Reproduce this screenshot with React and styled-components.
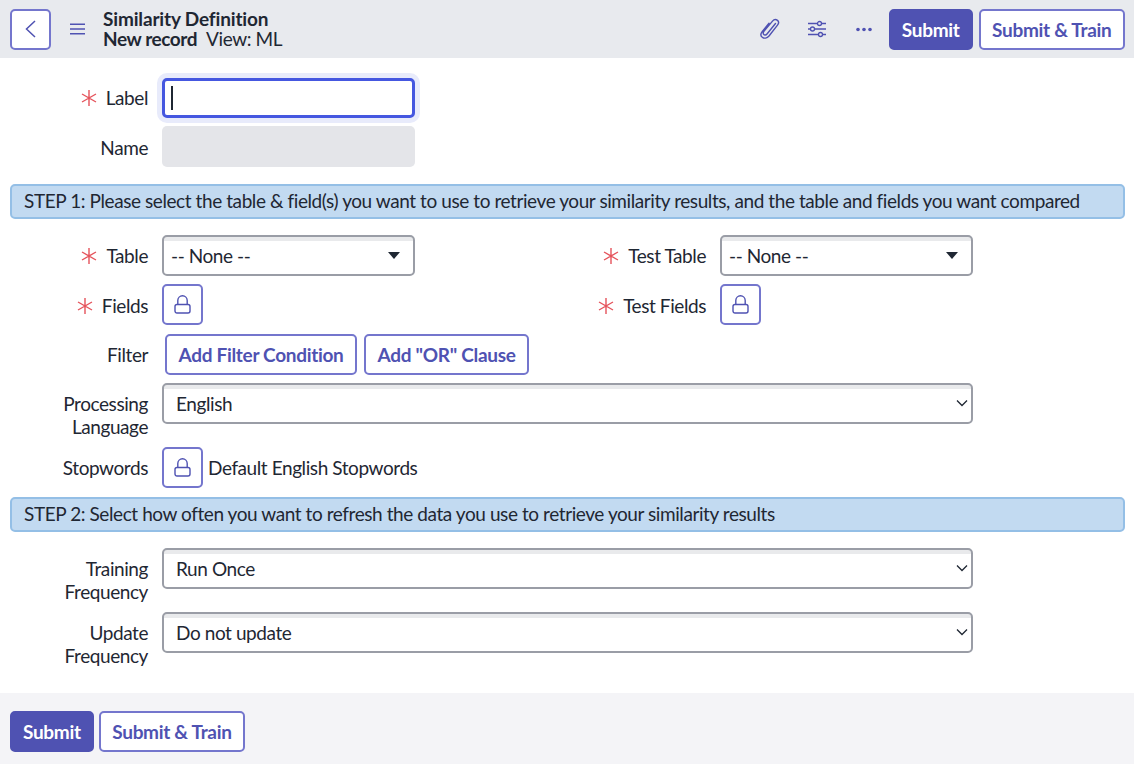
import React from "react";
import styled, { createGlobalStyle } from "styled-components";

const Global = createGlobalStyle`
  html, body { margin: 0; padding: 0; background: #fff; }
  body { font-family: Lato, "Liberation Sans", sans-serif; color: #1f2733; font-size: 19px; letter-spacing: -0.42px; }
  button { letter-spacing: -0.3px; }
  * { box-sizing: border-box; }
`;
const Page = styled.div`width: 1134px; height: 764px; display: flex; flex-direction: column; overflow: hidden;`;
const Header = styled.header`height: 58px; flex: none; background: #e8eaee; display: flex; align-items: center; padding: 0 9px 0 10px;`;
const IconButton = styled.button`
  width: 41px; height: 41px; padding: 0; background: #fff; border: 2px solid #7476cd; border-radius: 5px;
  color: #4f52b2; display: flex; align-items: center; justify-content: center; flex: none;
`;
const MenuIcon = styled.span`display: flex; margin-left: 19px; color: #4f52b2;`;
const TitleBlock = styled.div`margin-left: 18px; line-height: 20px; color: #1f2733; flex: 1; letter-spacing: -0.15px;`;
const TitleLine = styled.div`letter-spacing: ${p => p.$tight ? "-0.42px" : "-0.15px"};`;
const Strong = styled.span`font-weight: 700;`;
const ViewName = styled.span`margin-left: 9px;`;
const ToolIcon = styled.span`display: flex; width: 24px; height: 24px; align-items: center; justify-content: center; color: #4f52b2; margin-right: ${p => p.$mr}px;`;
const Button = styled.button`
  height: 41px; padding: 0 ${p => p.$primary ? 11 : 11.5}px; border-radius: 5px; font: 700 19px Lato, sans-serif;
  border: 2px solid ${p => p.$primary ? "#4f52b2" : "#7476cd"};
  background: ${p => p.$primary ? "#4f52b2" : "#fff"};
  color: ${p => p.$primary ? "#fff" : "#4f52b2"};
  flex: none; white-space: nowrap;
`;
const Buttons = styled.div`display: flex; gap: 6px;`;
const Form = styled.main`flex: 1; min-height: 0; padding: 20px 9px 0 10px; display: flex; flex-direction: column;`;
const Row = styled.div`display: flex; align-items: flex-start; margin-bottom: ${p => p.$mb ?? 8}px;`;
const Label = styled.label`
  width: 138px; flex: none; text-align: right; line-height: 23px;
  padding-top: ${p => p.$top ?? 9}px; color: #1f2733; margin-right: 14px;
  display: flex; justify-content: flex-end; align-items: baseline;
`;
const LabelText = styled.span`display: block;`;
const Req = styled.span`display: inline-flex; align-self: center; margin-right: 8px; color: #e5535b;`;
const FocusInput = styled.div`
  width: 253px; height: 40px; border: 3px solid #4557e0; border-radius: 5px; background: #fff;
  box-shadow: 0 0 0 5px #e8ebfb; padding: 6px; display: flex; align-items: center;
`;
const Caret = styled.span`width: 1.5px; height: 24px; background: #1f2733;`;
const Disabled = styled.div`width: 253px; height: 41px; background: #e4e5e9; border-radius: 5px;`;
const Banner = styled.div`
  height: 35px; background: #c2daf1; border: 2px solid #94bfe6; border-radius: 5px; flex: none;
  line-height: 29px; padding-left: 12px; color: #1f2733; margin-bottom: ${p => p.$mb}px; white-space: nowrap;
`;
const Select = styled.div`
  width: 253px; height: 41px; border: 2px solid #9a9da6; border-radius: 5px; flex: none;
  background: linear-gradient(#e9eaec 0, #e9eaec 4px, #fff 4px);
  display: flex; align-items: center; justify-content: space-between;
  padding: 0 13px 0 7px; color: #1f2733;
`;
const WideSelect = styled(Select)`width: 811px; padding: 0 3px 1px 12px;`;
const Caretdown = styled.span`width: 0; height: 0; border-left: 6px solid transparent; border-right: 6px solid transparent; border-top: 7px solid #1f2733;`;
const Cols = styled.div`display: flex; margin-bottom: ${p => p.$mb}px;`;
const Half = styled.div`display: flex; width: ${p => p.$w}px; align-items: flex-start;`;
const ClauseButtons = styled.div`display: flex; gap: 7px; margin-left: 3px;`;
const StopValue = styled.span`margin-left: 5px; line-height: 41px;`;
const Footer = styled.footer`height: 71px; flex: none; background: #f4f4f7; display: flex; align-items: flex-start; padding: 18px 10px 0; gap: 5px;`;

const Star = () => (
  <Req>
    <svg width="18" height="18" viewBox="0 0 18 18" fill="none" stroke="currentColor" strokeWidth="1.4">
      <path d="M9 1v16M2 5l14 8M16 5L2 13" />
    </svg>
  </Req>
);
const Lock = () => (
  <svg width="17" height="19" viewBox="0 0 17 19" fill="none" stroke="currentColor" strokeWidth="1.4">
    <rect x="1" y="9.500" width="15" height="8.500" rx="2" />
    <path d="M3.800 9.500V5.500a4.700 4.700 0 0 1 9.400 0v4" />
  </svg>
);
const Chevron = () => (
  <svg width="12" height="8" viewBox="0 0 12 8" fill="none" stroke="#1f2733" strokeWidth="1.3">
    <path d="M1 1.500l5 5 5-5" />
  </svg>
);

export default function App() {
  return (
    <Page>
      <Global />
      <Header>
        <IconButton aria-label="Back">
          <svg width="12" height="20" viewBox="0 0 12 20" fill="none" stroke="currentColor" strokeWidth="1.5">
            <path d="M10 2L1.500 10l8.500 8" />
          </svg>
        </IconButton>
        <MenuIcon>
          <svg width="15" height="12" viewBox="0 0 15 12" fill="none" stroke="currentColor" strokeWidth="1.5">
            <path d="M0 1.200h15M0 6h15M0 10.800h15" />
          </svg>
        </MenuIcon>
        <TitleBlock>
          <TitleLine><Strong>Similarity Definition</Strong></TitleLine>
          <TitleLine $tight><Strong>New record</Strong><ViewName>View: ML</ViewName></TitleLine>
        </TitleBlock>
        <ToolIcon $mr={23}>
          <svg width="20" height="22" viewBox="0 0 20 22" fill="none" stroke="currentColor" strokeWidth="1.400" strokeLinecap="round">
            <path d="M15.500 5.500L7 16c-1 1.300-2.700 1.200-3.300.4-.7-.8-.6-2 .2-3l8.600-10.300c1.400-1.700 3.600-1.800 5-.7 1.300 1.100 1.300 3.100 0 4.700L9 18c-2 2.400-5 2.700-6.700 1.300C.7 18 .6 15.500 2.300 13.400L9 5.300" />
          </svg>
        </ToolIcon>
        <ToolIcon $mr={23}>
          <svg width="20" height="18" viewBox="0 0 20 18" fill="none" stroke="currentColor" strokeWidth="1.300">
            <path d="M1 3.500h9.500M14.500 3.500H19M1 9h2.500M7.500 9H19M1 14.500h10.500M15.500 14.500H19" />
            <circle cx="12.500" cy="3.500" r="2" /><circle cx="5.500" cy="9" r="2" /><circle cx="13.500" cy="14.500" r="2" />
          </svg>
        </ToolIcon>
        <ToolIcon $mr={13}>
          <svg width="16" height="5" viewBox="0 0 16 5" fill="currentColor">
            <circle cx="2" cy="2.500" r="1.800" /><circle cx="8" cy="2.500" r="1.800" /><circle cx="14" cy="2.500" r="1.800" />
          </svg>
        </ToolIcon>
        <Buttons>
          <Button $primary>Submit</Button>
          <Button>Submit &amp; Train</Button>
        </Buttons>
      </Header>
      <Form>
        <Row>
          <Label $top={8}><Star /><LabelText>Label</LabelText></Label>
          <FocusInput><Caret /></FocusInput>
        </Row>
        <Row $mb={17}>
          <Label $top={10}><LabelText>Name</LabelText></Label>
          <Disabled />
        </Row>
        <Banner $mb={16}>STEP 1: Please select the table &amp; field(s) you want to use to retrieve your similarity results, and the table and fields you want compared</Banner>
        <Cols $mb={8}>
          <Half $w={558}>
            <Label><Star /><LabelText>Table</LabelText></Label>
            <Select><span>-- None --</span><Caretdown /></Select>
          </Half>
          <Half $w={500}>
            <Label><Star /><LabelText>Test Table</LabelText></Label>
            <Select><span>-- None --</span><Caretdown /></Select>
          </Half>
        </Cols>
        <Cols $mb={9}>
          <Half $w={558}>
            <Label $top={10}><Star /><LabelText>Fields</LabelText></Label>
            <IconButton aria-label="Unlock fields"><Lock /></IconButton>
          </Half>
          <Half $w={500}>
            <Label $top={10}><Star /><LabelText>Test Fields</LabelText></Label>
            <IconButton aria-label="Unlock test fields"><Lock /></IconButton>
          </Half>
        </Cols>
        <Row>
          <Label><LabelText>Filter</LabelText></Label>
          <ClauseButtons>
            <Button>Add Filter Condition</Button>
            <Button>Add "OR" Clause</Button>
          </ClauseButtons>
        </Row>
        <Row $mb={9}>
          <Label><LabelText>Processing<br />Language</LabelText></Label>
          <WideSelect><span>English</span><Chevron /></WideSelect>
        </Row>
        <Row $mb={9}>
          <Label><LabelText>Stopwords</LabelText></Label>
          <IconButton aria-label="Unlock stopwords"><Lock /></IconButton>
          <StopValue>Default English Stopwords</StopValue>
        </Row>
        <Banner $mb={16}>STEP 2: Select how often you want to refresh the data you use to retrieve your similarity results</Banner>
        <Row $mb={9}>
          <Label><LabelText>Training<br />Frequency</LabelText></Label>
          <WideSelect><span>Run Once</span><Chevron /></WideSelect>
        </Row>
        <Row $mb={0}>
          <Label><LabelText>Update<br />Frequency</LabelText></Label>
          <WideSelect><span>Do not update</span><Chevron /></WideSelect>
        </Row>
      </Form>
      <Footer>
        <Button $primary>Submit</Button>
        <Button>Submit &amp; Train</Button>
      </Footer>
    </Page>
  );
}
